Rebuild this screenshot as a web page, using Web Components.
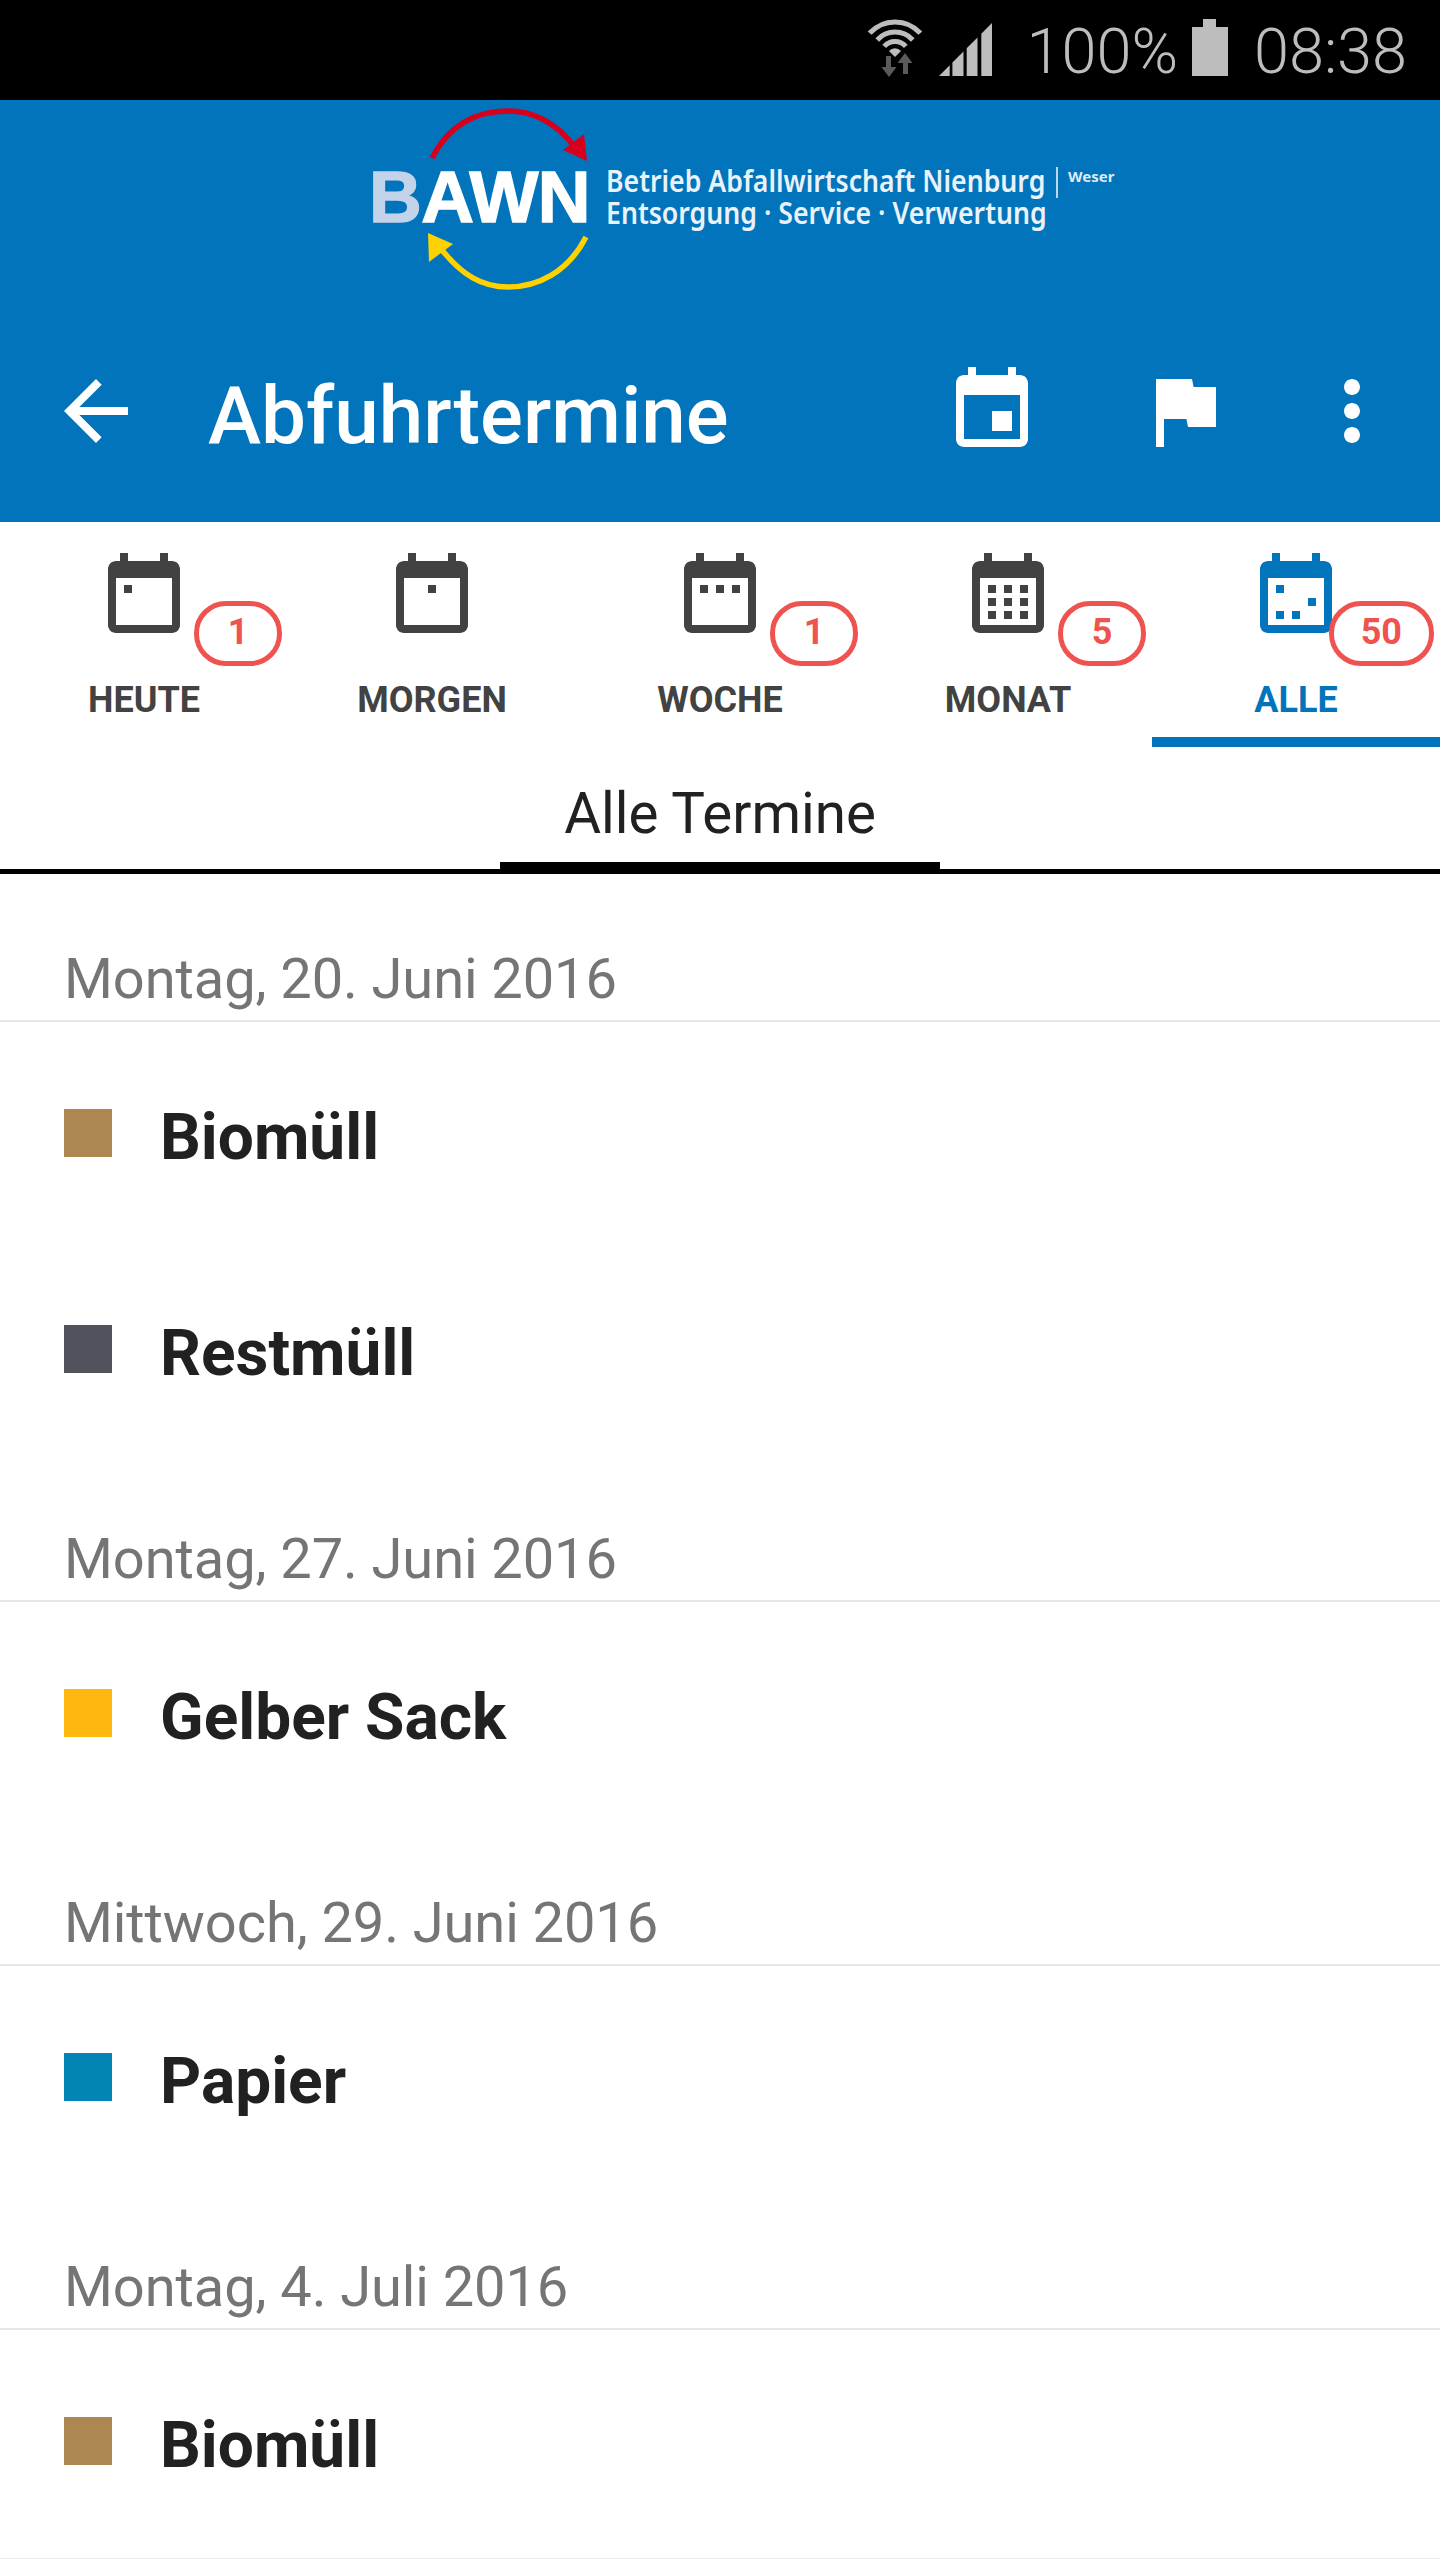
<!DOCTYPE html>
<html lang="de">
<head>
<meta charset="utf-8">
<title>Abfuhrtermine</title>
<style>
html, body { margin: 0; background: #fff; font-family: Roboto, "Liberation Sans", sans-serif; }
</style>
</head>
<body>
<app-screen>
  <status-bar></status-bar>
  <app-header title="Abfuhrtermine"></app-header>
  <tab-strip>
    <cat-tab kind="heute" label="HEUTE" count="1"></cat-tab>
    <cat-tab kind="morgen" label="MORGEN"></cat-tab>
    <cat-tab kind="woche" label="WOCHE" count="1"></cat-tab>
    <cat-tab kind="monat" label="MONAT" count="5"></cat-tab>
    <cat-tab kind="alle" label="ALLE" count="50" active></cat-tab>
  </tab-strip>
  <sub-tabs>Alle Termine</sub-tabs>
  <date-group date="Montag, 20. Juni 2016">
    <waste-row color="#ad8651">Biomüll</waste-row>
    <waste-row color="#51525c">Restmüll</waste-row>
  </date-group>
  <date-group date="Montag, 27. Juni 2016">
    <waste-row color="#ffb80f">Gelber Sack</waste-row>
  </date-group>
  <date-group date="Mittwoch, 29. Juni 2016">
    <waste-row color="#0284b5">Papier</waste-row>
  </date-group>
  <date-group date="Montag, 4. Juli 2016" last>
    <waste-row color="#ad8651">Biomüll</waste-row>
  </date-group>
</app-screen>

<script>
// material icon paths, 24 grid, drawn at 96px (4x density)
const EVENT = 'M17 12h-5v5h5v-5zM16 1v2H8V1H6v2H5c-1.11 0-1.99.9-1.99 2L3 19c0 1.1.89 2 2 2h14c1.1 0 2-.9 2-2V5c0-1.1-.9-2-2-2h-1V1h-2zm3 18H5V8h14v11z';
const FLAG = 'M14.4 6L14 4H5v17h2v-7h5.6l.4 2h7V6z';
const MORE = 'M12 8c1.1 0 2-.9 2-2s-.9-2-2-2-2 .9-2 2 .9 2 2 2zm0 2c-1.1 0-2 .9-2 2s.9 2 2 2 2-.9 2-2-.9-2-2-2zm0 6c-1.1 0-2 .9-2 2s.9 2 2 2 2-.9 2-2-.9-2-2-2z';
const BACK = 'M20 11H7.83l5.59-5.59L12 4l-8 8 8 8 1.41-1.41L7.83 13H20v-2z';
const CAL = 'M6 1h2v2h8V1h2v2h1c1.1 0 2 .9 2 2v14c0 1.1-.9 2-2 2H5c-1.1 0-2-.9-2-2V5c0-1.1.9-2 2-2h1zM5 19h14V7.25H5z';

const X = [7, 11, 15];
const Y = [9, 12.25, 15.5];
const DOTS = {
  heute: [[0, 0]],
  morgen: [[1, 0]],
  woche: [[0, 0], [1, 0], [2, 0]],
  monat: [[0, 0], [1, 0], [2, 0], [0, 1], [1, 1], [2, 1], [0, 2], [1, 2], [2, 2]],
  alle: [[0, 0], [2, 1], [0, 2], [1, 2]]
};

function icon(d, size) {
  return `<svg width="${size}" height="${size}" viewBox="0 0 24 24" fill="currentColor"><path d="${d}"/></svg>`;
}

class AppScreen extends HTMLElement {
  constructor() {
    super();
    this.attachShadow({mode: 'open'}).innerHTML = `
      <style>
        :host { display: flex; flex-direction: column; width: 1440px; height: 2560px; overflow: hidden; background: #fff; }
      </style>
      <slot></slot>`;
  }
}

class StatusBar extends HTMLElement {
  constructor() {
    super();
    this.attachShadow({mode: 'open'}).innerHTML = `
      <style>
        :host { display: flex; align-items: flex-start; justify-content: flex-end; height: 100px; box-sizing: border-box; padding-right: 33px; background: #000; color: #bdbdbd; font: 300 63px/1 Roboto, sans-serif; }
        svg { display: block; flex: none; }
        .wifi { margin-top: 19px; }
        .signal { margin: 23px 35px 0 17px; }
        .txt { margin-top: 20px; height: 63px; }
        .batt { margin: 19px 26px 0 14px; }
      </style>
      <svg class="wifi" width="54" height="58" viewBox="0 0 54 58" fill="none" stroke="currentColor" stroke-width="5">
        <path d="M1.7 14.2A34 34 0 0 1 52.3 14.2"/>
        <path d="M9.2 21A24 24 0 0 1 44.8 21"/>
        <path d="M16.2 27.3A14.5 14.5 0 0 1 37.8 27.3"/>
        <path d="M21 32L27 38L33 32A8 8 0 0 0 21 32Z" fill="currentColor" stroke="none"/>
        <path d="M18 37h5v11h5.500L21 58l-7.500-10H18z" fill="#5a5a5a" stroke="none"/>
        <path d="M37 34l7.500 10H40v11h-5V44h-5.500z" fill="#5a5a5a" stroke="none"/>
      </svg>
      <svg class="signal" width="53" height="53" viewBox="0 0 53 53" fill="currentColor">
        <polygon points="0,53 10.700,42.300 10.700,53"/>
        <polygon points="13.400,53 13.400,39.600 24.500,28.500 24.500,53"/>
        <polygon points="27.700,53 27.700,25.300 38.500,14.500 38.500,53"/>
        <polygon points="42.300,53 42.300,10.700 53,0 53,53"/>
      </svg>
      <span class="txt">100%</span>
      <svg class="batt" width="36" height="57" viewBox="0 0 36 57" fill="currentColor">
        <path d="M11 0h13v8h12v49H0V8h11z"/>
      </svg>
      <span class="txt">08:38</span>`;
  }
}

class AppHeader extends HTMLElement {
  constructor() {
    super();
    this.attachShadow({mode: 'open'}).innerHTML = `
      <style>
        :host { display: block; background: #0174bb; color: #fff; height: 422px; }
        .logo { position: relative; display: flex; height: 200px; box-sizing: border-box; padding: 60px 0 0 369px; }
        .logo svg { position: absolute; left: 373px; top: 0; }
        .bawn { font: 700 73px/1 "Liberation Sans", sans-serif; letter-spacing: -.5px; -webkit-text-stroke: 1.5px currentColor; width: 237px; height: 73px; flex: none; }
        .bawn span { color: #c3d3ea; }
        .sub { margin-top: 5px; font: 600 31px/31px "Noto Sans", sans-serif; color: #eaf2f9; transform: scaleX(.86); transform-origin: left top; white-space: nowrap; }
        .sub div { height: 32px; }
        .weser { position: absolute; left: 1068px; top: 69px; font: 700 15px/1 "Noto Sans", sans-serif; color: #dfeaf5; }
        .rule { position: absolute; left: 1056px; top: 67px; width: 2px; height: 31px; background: #bcd6ea; }
        .bar { display: flex; align-items: center; height: 222px; }
        .bar svg { display: block; flex: none; }
        .back { margin-left: 48px; }
        h1 { flex: 1; margin: 0 0 0 64px; padding-top: 10px; font: 500 80px/96px Roboto, sans-serif; white-space: nowrap; }
        .act { margin-left: 96px; }
        .act.first { margin-left: 0; }
        .more { margin: 0 40px 0 72px; }
      </style>
      <div class="logo">
        <svg width="240" height="200" viewBox="373 100 240 200" fill="none" stroke-width="5.500">
          <path d="M432 158C450 123 478 111 508 111C535 111 556 123 574 146" stroke="#d6001c"/>
          <polygon points="587,161 584,134 563,150" fill="#d6001c"/>
          <path d="M586 237C568 272 538 287 508 287C482 287 462 275 442 250" stroke="#fed100"/>
          <polygon points="428,233 453,244 429,262" fill="#fed100"/>
        </svg>
        <div class="bawn"><span>B</span>AWN</div>
        <div class="sub">
          <div>Betrieb Abfallwirtschaft Nienburg</div>
          <div>Entsorgung · Service · Verwertung</div>
        </div>
        <i class="rule"></i>
        <span class="weser">Weser</span>
      </div>
      <div class="bar">
        <span class="back">${icon(BACK, 96)}</span>
        <h1>${this.getAttribute('title')}</h1>
        <span class="act first">${icon(EVENT, 96)}</span>
        <span class="act">${icon(FLAG, 96)}</span>
        <span class="more">${icon(MORE, 96)}</span>
      </div>`;
  }
}

class TabStrip extends HTMLElement {
  constructor() {
    super();
    this.attachShadow({mode: 'open'}).innerHTML = `
      <style>
        :host { display: grid; grid-template-columns: repeat(5, 288px); height: 225px; background: #fff; }
      </style>
      <slot></slot>`;
  }
}

class CatTab extends HTMLElement {
  constructor() {
    super();
    const kind = this.getAttribute('kind');
    const count = this.getAttribute('count');
    const dots = DOTS[kind].map(([c, r]) => `<rect x="${X[c]}" y="${Y[r]}" width="2" height="2"/>`).join('');
    this.attachShadow({mode: 'open'}).innerHTML = `
      <style>
        :host { display: flex; flex-direction: column; align-items: center; position: relative; box-sizing: border-box; height: 225px; padding-top: 27px; color: #424242; font-family: Roboto, sans-serif; }
        :host([active]) { color: #0174bb; border-bottom: 10px solid #0174bb; }
        svg { display: block; flex: none; }
        .label { margin-top: 34px; font-size: 36px; line-height: 42px; font-weight: 700; }
        .badge { position: absolute; right: 6px; top: 79px; box-sizing: border-box; min-width: 88px; height: 65px; padding: 0 27px; border: 5px solid #ef5350; border-radius: 32px; background: #fff; color: #ef5350; font-size: 36px; line-height: 53px; font-weight: 700; text-align: center; }
      </style>
      <svg width="96" height="96" viewBox="0 0 24 24" fill="currentColor"><path fill-rule="evenodd" d="${CAL}"/>${dots}</svg>
      <span class="label">${this.getAttribute('label')}</span>
      ${count ? `<span class="badge">${count}</span>` : ''}`;
  }
}

class SubTabs extends HTMLElement {
  constructor() {
    super();
    this.attachShadow({mode: 'open'}).innerHTML = `
      <style>
        :host { display: flex; justify-content: center; box-sizing: border-box; height: 127px; border-bottom: 5px solid #000; color: #212121; font: 400 56.5px/1 Roboto, sans-serif; }
        .item { box-sizing: border-box; width: 440px; height: 127px; padding-top: 39px; border-bottom: 12px solid #000; text-align: center; }
      </style>
      <div class="item"><slot></slot></div>`;
  }
}

class DateGroup extends HTMLElement {
  constructor() {
    super();
    this.attachShadow({mode: 'open'}).innerHTML = `
      <style>
        :host { display: block; }
        .date { box-sizing: border-box; height: 148px; padding: 72px 0 0 64px; border-bottom: 2px solid #e6e6e6; color: #757575; font: 400 56px/1.2 Roboto, sans-serif; letter-spacing: -.08px; white-space: nowrap; }
        .end { height: 12px; border-bottom: 1px solid #e8ecef; }
      </style>
      <div class="date">${this.getAttribute('date')}</div>
      <slot></slot>
      ${this.hasAttribute('last') ? '<div class="end"></div>' : ''}`;
  }
}

class WasteRow extends HTMLElement {
  constructor() {
    super();
    this.attachShadow({mode: 'open'}).innerHTML = `
      <style>
        :host { display: flex; align-items: center; gap: 48px; box-sizing: border-box; height: 216px; padding: 6px 0 0 64px; color: #212121; font: 700 64px/1 Roboto, sans-serif; }
        i { display: block; flex: none; width: 48px; height: 48px; background: ${this.getAttribute('color')}; }
        span { padding-top: 10px; }
      </style>
      <i></i><span><slot></slot></span>`;
  }
}

customElements.define('app-screen', AppScreen);
customElements.define('status-bar', StatusBar);
customElements.define('app-header', AppHeader);
customElements.define('tab-strip', TabStrip);
customElements.define('cat-tab', CatTab);
customElements.define('sub-tabs', SubTabs);
customElements.define('date-group', DateGroup);
customElements.define('waste-row', WasteRow);
</script>
</body>
</html>
